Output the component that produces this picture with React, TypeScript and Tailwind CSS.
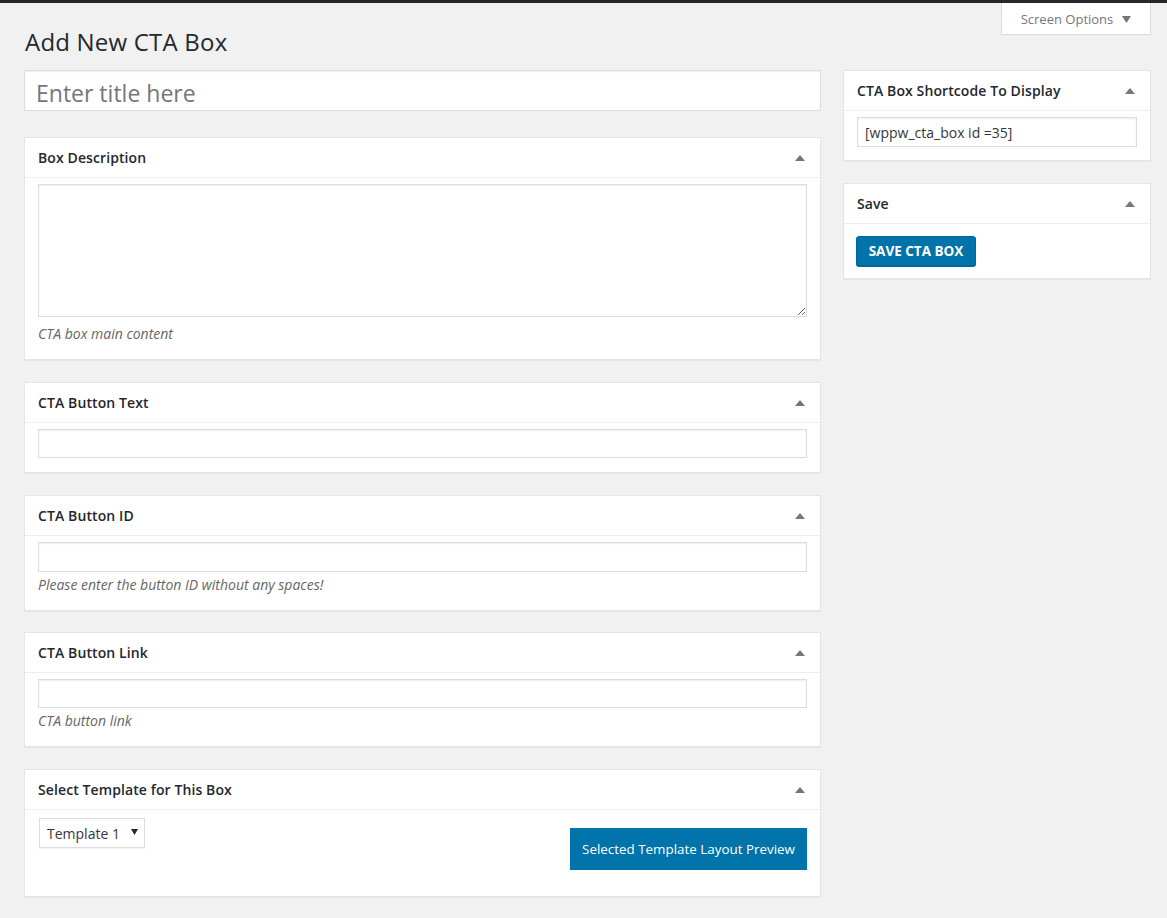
import React from 'react'

const font = "font-['Open_Sans','Noto_Sans',Arial,sans-serif]"

function Toggle() {
  return (
    <svg width="10" height="6" viewBox="0 0 10 6" className="shrink-0">
      <path d="M0 6 L5 0 L10 6 Z" fill="#72777c" />
    </svg>
  )
}

interface PostboxProps {
  title: string
  children: React.ReactNode
  className?: string
}

function Postbox({ title, children, className = '' }: PostboxProps) {
  return (
    <div className={`bg-white border border-[#e5e5e5] shadow-[0_1px_1px_rgba(0,0,0,0.04)] ${className}`}>
      <div className="h-[40px] flex items-center justify-between pl-[13px] pr-[15px] border-b border-[#eee]">
        <h2 className="text-[14px] font-semibold text-[#23282d] leading-[1.4] tracking-[0.1px]">{title}</h2>
        <Toggle />
      </div>
      {children}
    </div>
  )
}

function TextInput({ value = '', h = 'h-[30px]' }: { value?: string; h?: string }) {
  return (
    <input
      type="text"
      defaultValue={value}
      className={`w-full ${h} border border-[#ddd] bg-white px-[7px] text-[14px] text-[#32373c] shadow-[inset_0_1px_2px_rgba(0,0,0,0.07)] outline-none`}
    />
  )
}

function Desc({ children, className = '' }: { children: React.ReactNode; className?: string }) {
  return <p className={`text-[14px] italic text-[#666] leading-[18px] ${className}`}>{children}</p>
}

export default function App() {
  return (
    <div className={`min-h-screen bg-[#f1f1f1] ${font}`}>
      <div className="h-[3px] bg-[#23282d]" />
      <div className="pl-[24px] pr-[16px]">
        {/* Header */}
        <div className="flex items-start justify-between">
          <h1 className="mt-[24px] ml-[1px] text-[24px] leading-[29px] font-normal text-[#23282d] tracking-[0.2px]">Add New CTA Box</h1>
          <button className="h-[32px] w-[150px] pt-[2px] bg-white border border-t-0 border-[#ddd] shadow-[0_1px_1px_-1px_rgba(0,0,0,0.1)] flex items-center justify-center gap-[9px] text-[13px] text-[#72777c]">
            Screen Options
            <svg width="9" height="7" viewBox="0 0 9 7">
              <path d="M0 0 L9 0 L4.5 7 Z" fill="#72777c" />
            </svg>
          </button>
        </div>

        {/* Columns */}
        <div className="flex gap-[22px] mt-[14px] items-start">
          {/* Main column */}
          <div className="flex-1 flex flex-col">
            <input
              type="text"
              placeholder="Enter title here"
              className="h-[41px] w-full bg-white border border-[#ddd] pl-[11px] pt-[4px] text-[23px] text-[#32373c] placeholder:text-[#72777c] shadow-[inset_0_1px_2px_rgba(0,0,0,0.07)] outline-none"
            />

            <Postbox title="Box Description" className="mt-[26px]">
              <div className="px-[13px] pt-[6px] pb-[16px]">
                <textarea className="block w-full h-[133px] border border-[#ddd] bg-white shadow-[inset_0_1px_2px_rgba(0,0,0,0.07)] outline-none" />
                <Desc className="mt-[8px]">CTA box main content</Desc>
              </div>
            </Postbox>

            <Postbox title="CTA Button Text" className="mt-[22px]">
              <div className="px-[13px] pt-[6px] pb-[14px]">
                <TextInput h="h-[29px]" />
              </div>
            </Postbox>

            <Postbox title="CTA Button ID" className="mt-[22px]">
              <div className="px-[13px] pt-[6px] pb-[16px]">
                <TextInput />
                <Desc className="mt-[4px]">Please enter the button ID without any spaces!</Desc>
              </div>
            </Postbox>

            <Postbox title="CTA Button Link" className="mt-[21px]">
              <div className="px-[13px] pt-[6px] pb-[16px]">
                <TextInput h="h-[29px]" />
                <Desc className="mt-[4px]">CTA button link</Desc>
              </div>
            </Postbox>

            <Postbox title="Select Template for This Box" className="mt-[22px]">
              <div className="px-[13px] pt-[8px] pb-[26px] flex items-start justify-between">
                <div className="ml-[1px] h-[30px] w-[106px] border border-[#ddd] bg-white flex items-center justify-between pl-[7px] pr-[6px] text-[14px] text-[#32373c] shadow-[0_1px_1px_rgba(0,0,0,0.04)]">
                  <span>Template 1</span>
                  <svg width="7" height="6" viewBox="0 0 7 6" className="mb-[3px]">
                    <path d="M0 0 L7 0 L3.5 6 Z" fill="#23282d" />
                  </svg>
                </div>
                <button className="mt-[10px] h-[42px] w-[237px] bg-[#0073aa] text-white text-[13.4px]">
                  Selected Template Layout Preview
                </button>
              </div>
            </Postbox>
          </div>

          {/* Sidebar */}
          <div className="w-[308px] shrink-0 flex flex-col">
            <Postbox title="CTA Box Shortcode To Display">
              <div className="px-[13px] pt-[6px] pb-[13px]">
                <TextInput value="[wppw_cta_box id =35]" />
              </div>
            </Postbox>

            <Postbox title="Save" className="mt-[22px]">
              <div className="px-[12px] pt-[12px] pb-[12px]">
                <button className="h-[30px] w-[120px] rounded-[3px] bg-[#0073aa] border border-[#006799] shadow-[0_1px_0_#006799] text-white text-[13.5px] font-bold uppercase">
                  Save CTA Box
                </button>
              </div>
            </Postbox>
          </div>
        </div>
      </div>
    </div>
  )
}
